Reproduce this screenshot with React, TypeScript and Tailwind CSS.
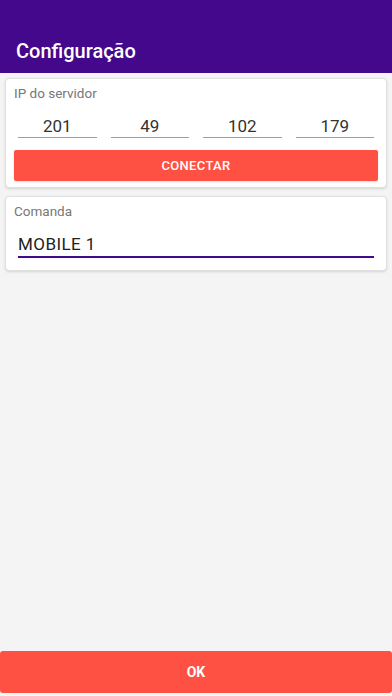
import React from "react";

const font = { fontFamily: "Roboto, 'Liberation Sans', sans-serif" };

const IpField: React.FC<{ value: string }> = ({ value }) => (
  <div className="flex-1 border-b border-[#9e9e9e] h-[24px] flex items-end justify-center pb-[1px]">
    <span className="text-[17px] leading-[20px] text-[#333]">{value}</span>
  </div>
);

export default function App() {
  return (
    <div className="w-[392px] h-[696px] bg-[#f4f4f4] flex flex-col" style={font}>
      <header className="h-[73px] bg-[#44088c] flex items-end px-4 pb-[9px]">
        <h1 className="text-white text-[20px] leading-[26px] font-medium">Configuração</h1>
      </header>

      <div className="flex-1 flex flex-col px-[5px] pt-[5px] gap-[8px]">
        <div className="bg-white rounded-[4px] border border-[#e0e0e0] shadow-sm px-[8px] pt-[6px] pb-[6px]">
          <p className="text-[13.5px] leading-[16px] text-[#777]">IP do servidor</p>
          <div className="flex gap-[14px] px-[4px] mt-[13px]">
            <IpField value="201" />
            <IpField value="49" />
            <IpField value="102" />
            <IpField value="179" />
          </div>
          <button className="mt-[12px] w-full h-[31px] bg-[#fe5043] rounded-[2px] shadow text-white text-[13px] font-medium tracking-wide">
            CONECTAR
          </button>
        </div>

        <div className="bg-white rounded-[4px] border border-[#e0e0e0] shadow-sm px-[8px] pt-[6px] pb-[12px]">
          <p className="text-[13.5px] leading-[16px] text-[#777]">Comanda</p>
          <div className="mx-[4px] mt-[11px] border-b-2 border-[#44088c] h-[28px] flex items-end pb-[2px]">
            <span className="text-[17px] leading-[20px] text-[#222] tracking-wide">MOBILE 1</span>
          </div>
        </div>
      </div>

      <div className="h-[3px]" />
      <button className="h-[42px] mb-[3px] w-full bg-[#fe5043] rounded-[3px] text-white text-[14px] font-bold">
        OK
      </button>
    </div>
  );
}
